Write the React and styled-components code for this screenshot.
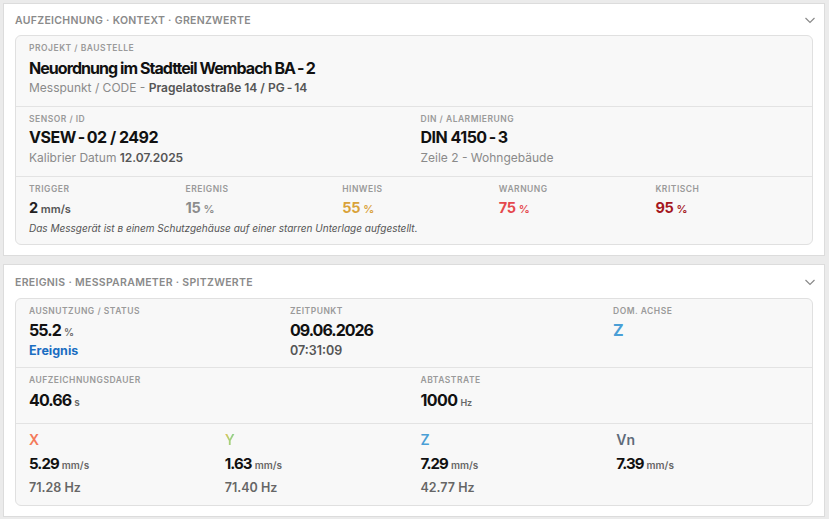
import React from 'react'
import styled, { createGlobalStyle } from 'styled-components'

const GlobalStyle = createGlobalStyle`
  html, body {
    margin: 0;
    padding: 0;
    background: #ebebeb;
    font-family: Inter, 'Noto Sans', sans-serif;
  }
`

const Page = styled.div`
  display: flex;
  flex-direction: column;
  gap: 8px;
  padding: 3px 4px 3px 3px;
`

const Panel = styled.section`
  background: #fff;
  border: 1px solid #dcdcdc;
  padding: 0 11px 10px 11px;
`

const PanelHead = styled.div`
  display: flex;
  align-items: center;
  justify-content: space-between;
  height: ${p => p.$h || 30}px;
  padding-top: 1px;
`

const PanelTitle = styled.h2`
  margin: 0;
  font-size: 10.5px;
  font-weight: 600;
  letter-spacing: 0.3px;
  color: #8a8a8a;
  text-transform: uppercase;
`

const Chevron = styled.svg`
  width: 14px;
  height: 14px;
  color: #8a8a8a;
  margin-right: -4px;
`

const Card = styled.div`
  background: #f8f8f8;
  border: 1px solid #e0e0e0;
  border-radius: 6px;
`

const Row = styled.div`
  display: grid;
  grid-template-columns: ${p => p.$cols};
  column-gap: 13px;
  padding: ${p => p.$pad || '6px 13px 9px'};
  & + & {
    border-top: 1px solid #e3e3e3;
  }
`

const Cell = styled.div`
  display: flex;
  flex-direction: column;
  align-items: flex-start;
  min-width: 0;
`

const Label = styled.div`
  font-size: 8.5px;
  font-weight: 600;
  letter-spacing: 0.5px;
  color: #9a9a9a;
  text-transform: uppercase;
  line-height: 12px;
`

const Title = styled.div`
  font-size: 16px;
  font-weight: 700;
  color: #111;
  line-height: 22px;
  margin-top: 3px;
  letter-spacing: -0.95px;
`

const Big = styled.div`
  font-size: 16px;
  font-weight: 700;
  color: #111;
  line-height: 20px;
  margin-top: 2px;
  letter-spacing: -0.5px;
`

const Dash = styled.span`
  padding: 0 2px;
`

const Sub = styled.div`
  font-size: 12px;
  color: #8a8a8a;
  line-height: 18px;
  margin-top: ${p => p.$mt ?? 2}px;
  b {
    font-weight: 600;
    color: #555;
  }
`

const Value = styled.div`
  font-size: ${p => p.$size || 14.5}px;
  font-weight: 700;
  color: ${p => p.$color || '#222'};
  line-height: ${p => p.$lh || 20}px;
  margin-top: ${p => p.$mt ?? 3}px;
  letter-spacing: ${p => p.$ls ?? -0.6}px;
`

const Unit = styled.span`
  font-size: ${p => p.$size || 10}px;
  font-weight: 600;
  line-height: 1;
  color: ${p => p.$color || '#666'};
  margin-left: 3px;
  letter-spacing: 0;
`

const Note = styled.div`
  grid-column: 1 / -1;
  font-size: 10px;
  font-style: italic;
  color: #555;
  line-height: 14px;
  margin-top: 3px;
`

const Status = styled.div`
  font-size: 12.5px;
  font-weight: 700;
  color: #1b6ec2;
  line-height: 18px;
  margin-top: 2px;
`

const Time = styled.div`
  font-size: 12.5px;
  font-weight: 600;
  color: #555;
  line-height: 18px;
  margin-top: 2px;
`

const Axis = styled.div`
  display: inline-block;
  font-size: 14px;
  font-weight: 600;
  line-height: 18px;
  color: ${p => p.$color};
  ${p => p.$gradient && `
    background: ${p.$gradient};
    -webkit-background-clip: text;
    background-clip: text;
    color: transparent;
  `}
`

const Freq = styled.div`
  font-size: 12.5px;
  font-weight: 600;
  color: #666;
  line-height: 18px;
  margin-top: 5px;
  min-height: 18px;
`

const ChevronIcon = () => (
  <Chevron viewBox="0 0 14 14" fill="none" stroke="currentColor" strokeWidth="1.2">
    <path d="M2.5 5l4.5 4.5L11.5 5" />
  </Chevron>
)

const thresholds = [
  { label: 'Trigger', value: '2', unit: 'mm/s', color: '#222', unitColor: '#555' },
  { label: 'Ereignis', value: '15', unit: '%', color: '#8c8c8c', unitColor: '#8c8c8c' },
  { label: 'Hinweis', value: '55', unit: '%', color: '#d9a23a', unitColor: '#d9a23a' },
  { label: 'Warnung', value: '75', unit: '%', color: '#e5484d', unitColor: '#e5484d' },
  { label: 'Kritisch', value: '95', unit: '%', color: '#a5171d', unitColor: '#a5171d' },
]

const axes = [
  { name: 'X', color: '#f47a5a', value: '5.29', freq: '71.28 Hz' },
  { name: 'Y', gradient: 'linear-gradient(90deg, #eec452 0%, #a8cf78 45%, #84cf94 100%)', value: '1.63', freq: '71.40 Hz' },
  { name: 'Z', color: '#4a9fd6', value: '7.29', freq: '42.77 Hz' },
  { name: 'Vn', color: '#5f6b7a', value: '7.39', freq: '' },
]

export default function App() {
  return (
    <Page>
      <GlobalStyle />
      <Panel>
        <PanelHead>
          <PanelTitle>Aufzeichnung · Kontext · Grenzwerte</PanelTitle>
          <ChevronIcon />
        </PanelHead>
        <Card>
          <Row $cols="1fr">
            <Cell>
              <Label>Projekt / Baustelle</Label>
              <Title>
                Neuordnung im Stadtteil Wembach BA<Dash>-</Dash>2
              </Title>
              <Sub $mt={0}>
                Messpunkt / CODE - <b>Pragelatostraße 14 / PG<Dash>-</Dash>14</b>
              </Sub>
            </Cell>
          </Row>
          <Row $cols="1fr 1fr">
            <Cell>
              <Label>Sensor / ID</Label>
              <Big>
                VSEW<Dash>-</Dash>02 / 2492
              </Big>
              <Sub>
                Kalibrier Datum <b>12.07.2025</b>
              </Sub>
            </Cell>
            <Cell>
              <Label>DIN / Alarmierung</Label>
              <Big>
                DIN 4150<Dash>-</Dash>3
              </Big>
              <Sub>Zeile 2 - Wohngebäude</Sub>
            </Cell>
          </Row>
          <Row $cols="repeat(5, 1fr)" $pad="6px 13px 9px">
            {thresholds.map(t => (
              <Cell key={t.label}>
                <Label>{t.label}</Label>
                <Value $color={t.color} $ls={-0.3}>
                  {t.value}
                  <Unit $size={11} $color={t.unitColor}>{t.unit}</Unit>
                </Value>
              </Cell>
            ))}
            <Note>Das Messgerät ist в einem Schutzgehäuse auf einer starren Unterlage aufgestellt.</Note>
          </Row>
        </Card>
      </Panel>

      <Panel>
        <PanelHead $h={32}>
          <PanelTitle>Ereignis · Messparameter · Spitzwerte</PanelTitle>
          <ChevronIcon />
        </PanelHead>
        <Card>
          <Row $cols="4fr 5fr 3fr" $pad="6px 13px 7px">
            <Cell>
              <Label>Ausnutzung / Status</Label>
              <Value $size={16} $color="#111" $ls={-0.9}>
                55.2<Unit $size={10}>%</Unit>
              </Value>
              <Status>Ereignis</Status>
            </Cell>
            <Cell>
              <Label>Zeitpunkt</Label>
              <Value $size={16} $color="#111" $ls={-1}>09.06.2026</Value>
              <Time>07:31:09</Time>
            </Cell>
            <Cell>
              <Label>Dom. Achse</Label>
              <Value $size={16} $color="#4a9fd6">Z</Value>
            </Cell>
          </Row>
          <Row $cols="1fr 1fr" $pad="6px 13px 12px">
            <Cell>
              <Label>Aufzeichnungsdauer</Label>
              <Value $size={16} $color="#111" $lh={22} $ls={-0.9}>
                40.66<Unit $size={10}>s</Unit>
              </Value>
            </Cell>
            <Cell>
              <Label>Abtastrate</Label>
              <Value $size={16} $color="#111" $lh={22} $ls={-0.6}>
                1000<Unit $size={9}>Hz</Unit>
              </Value>
            </Cell>
          </Row>
          <Row $cols="repeat(4, 1fr)" $pad="7px 13px 8px">
            {axes.map(a => (
              <Cell key={a.name}>
                <Axis $color={a.color} $gradient={a.gradient}>{a.name}</Axis>
                <Value $size={15} $color="#111" $mt={5} $ls={-0.9}>
                  {a.value}
                  <Unit $size={10}>mm/s</Unit>
                </Value>
                <Freq>{a.freq}</Freq>
              </Cell>
            ))}
          </Row>
        </Card>
      </Panel>
    </Page>
  )
}
